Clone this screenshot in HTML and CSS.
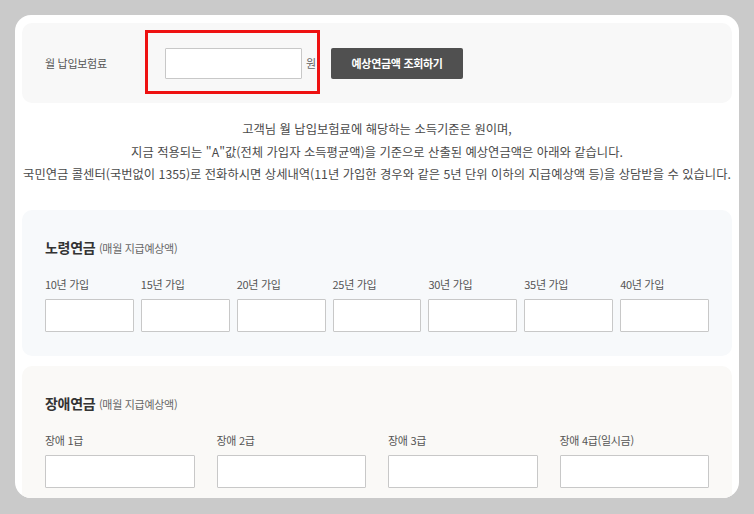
FILE: index.html
```html
<!DOCTYPE html>
<html lang="ko">
<head>
<meta charset="utf-8">
<link rel="stylesheet" href="styles.css">
</head>
<body>
<div class="card">
  <div class="query">
    <div class="query-label">월 납입보험료</div>
    <div class="amount">
      <input class="box amount-input" type="text">
      <span class="unit">원</span>
      <div class="highlight"></div>
    </div>
    <button class="btn">예상연금액 조회하기</button>
  </div>
  <div class="notice">
    <p>고객님 월 납입보험료에 해당하는 소득기준은 원이며,</p>
    <p>지금 적용되는 "A"값(전체 가입자 소득평균액)을 기준으로 산출된 예상연금액은 아래와 같습니다.</p>
    <p>국민연금 콜센터(국번없이 1355)로 전화하시면 상세내역(11년 가입한 경우와 같은 5년 단위 이하의 지급예상액 등)을 상담받을 수 있습니다.</p>
  </div>
  <div class="section old">
    <h3 class="sec-title">노령연금 <span class="sec-sub">(매월 지급예상액)</span></h3>
    <div class="grid seven">
      <div class="field"><span class="f-label">10년 가입</span><input class="box" type="text"></div>
      <div class="field"><span class="f-label">15년 가입</span><input class="box" type="text"></div>
      <div class="field"><span class="f-label">20년 가입</span><input class="box" type="text"></div>
      <div class="field"><span class="f-label">25년 가입</span><input class="box" type="text"></div>
      <div class="field"><span class="f-label">30년 가입</span><input class="box" type="text"></div>
      <div class="field"><span class="f-label">35년 가입</span><input class="box" type="text"></div>
      <div class="field"><span class="f-label">40년 가입</span><input class="box" type="text"></div>
    </div>
  </div>
  <div class="section dis">
    <h3 class="sec-title">장애연금 <span class="sec-sub">(매월 지급예상액)</span></h3>
    <div class="grid four">
      <div class="field"><span class="f-label">장애 1급</span><input class="box" type="text"></div>
      <div class="field"><span class="f-label">장애 2급</span><input class="box" type="text"></div>
      <div class="field"><span class="f-label">장애 3급</span><input class="box" type="text"></div>
      <div class="field"><span class="f-label">장애 4급(일시금)</span><input class="box" type="text"></div>
    </div>
  </div>
</div>
</body>
</html>
```
FILE: styles.css
```css
* { box-sizing: border-box; }
html, body { margin: 0; padding: 0; }
body {
  background: #cacaca;
  font-family: "Noto Sans CJK KR", "Noto Sans", sans-serif;
  color: #555;
  width: 754px;
  height: 514px;
  overflow: hidden;
}
.card {
  margin: 15px 0 0 15px;
  width: 724px;
  height: 483px;
  background: #fff;
  border-radius: 16px;
  overflow: hidden;
  padding: 8px 7px 0 7px;
}
.query {
  height: 80px;
  background: #f8f8f8;
  border-radius: 10px;
  display: flex;
  align-items: center;
  padding-left: 23px;
}
.query-label {
  width: 100px;
  font-size: 11px;
  color: #555;
  letter-spacing: -0.3px;
}
.amount {
  position: relative;
  display: flex;
  align-items: center;
  margin-left: 20px;
}
.box {
  display: block;
  background: #fff;
  border: 1px solid #c8c8c8;
  border-radius: 1px;
  height: 33px;
  width: 100%;
  margin: 0;
  padding: 0 6px;
  font: inherit;
}
.amount-input {
  width: 137px;
  height: 31px;
}
.unit {
  font-size: 11px;
  color: #666;
  margin-left: 4px;
}
.highlight {
  position: absolute;
  left: -20px;
  top: -18px;
  width: 175px;
  height: 64px;
  border: 3px solid #ee1111;
}
.btn {
  margin-left: 15px;
  width: 132px;
  height: 31px;
  background: #505050;
  color: #fff;
  border: 0;
  border-radius: 2px;
  font-family: inherit;
  font-size: 11px;
  font-weight: 700;
  letter-spacing: -0.3px;
  padding: 0;
}
.notice {
  margin: 15px 0 24px;
  text-align: center;
  font-size: 12.3px;
  line-height: 22.5px;
  color: #4a4a4a;
  letter-spacing: 0;
}
.notice p { margin: 0; white-space: nowrap; }
.section {
  border-radius: 10px;
  padding: 27px 23px 24px;
}
.section + .section { margin-top: 10px; }
.old { background: #f7f9fb; }
.dis { background: #faf9f7; }
.sec-title {
  margin: 0;
  font-size: 14px;
  line-height: 20px;
  font-weight: 700;
  color: #333;
  letter-spacing: -0.3px;
}
.sec-sub {
  font-size: 11px;
  font-weight: 400;
  color: #666;
}
.grid {
  display: grid;
  margin-top: 18px;
}
.seven { grid-template-columns: repeat(7, 1fr); column-gap: 7px; }
.four { grid-template-columns: repeat(4, 1fr); column-gap: 22px; }
.field { display: flex; flex-direction: column; }
.f-label {
  font-size: 11px;
  line-height: 16px;
  color: #555;
  margin-bottom: 7px;
  letter-spacing: -0.3px;
}
```
